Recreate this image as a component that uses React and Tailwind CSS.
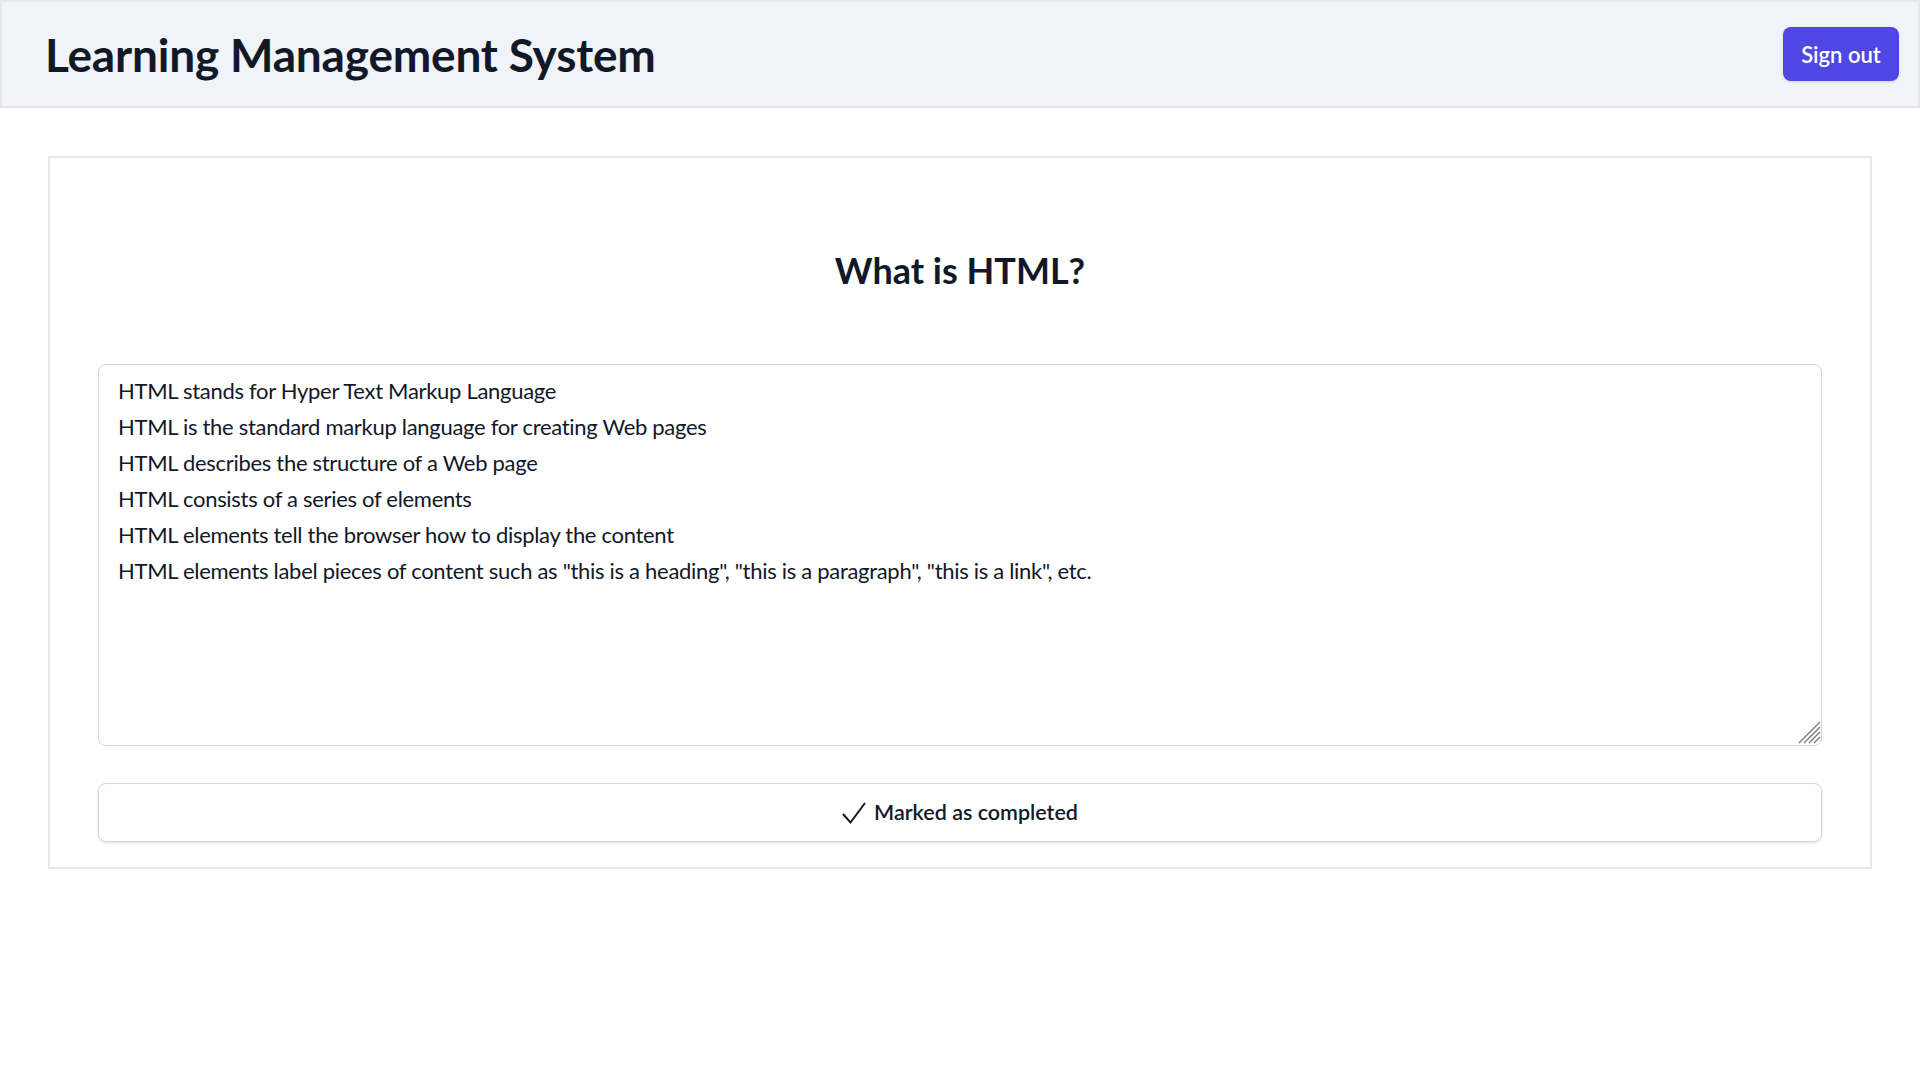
import React from "react";

const content = `HTML stands for Hyper Text Markup Language
HTML is the standard markup language for creating Web pages
HTML describes the structure of a Web page
HTML consists of a series of elements
HTML elements tell the browser how to display the content
HTML elements label pieces of content such as "this is a heading", "this is a paragraph", "this is a link", etc.`;

export default function App() {
  return (
    <div className="min-h-screen bg-white font-['Lato',sans-serif] text-[#111827]">
      <header className="flex h-[108px] items-center justify-between border-2 border-gray-200 bg-[#f0f3f8] pl-[43px] pr-[19px]">
        <h1 className="text-[46px] font-bold tracking-[-0.2px]">Learning Management System</h1>
        <button className="h-[54px] w-[116px] rounded-lg bg-[#4f46e5] text-[22px] font-semibold text-white shadow">
          Sign out
        </button>
      </header>
      <main className="px-12 pt-12">
        <div className="border-2 border-gray-200 px-12 pb-[25px]">
          <h2 className="pt-[92px] text-center text-4xl font-bold leading-10">What is HTML?</h2>
          <div className="relative mt-[74px]">
            <textarea
              className="block h-[382px] w-full resize-none rounded-lg border border-gray-300 py-2 pl-[19px] pr-4 text-[22px] leading-9 tracking-[-0.3px] text-[#111827] outline-none"
              defaultValue={content}
            />
            <svg
              className="pointer-events-none absolute bottom-[2px] right-[1px]"
              width="23"
              height="23"
              viewBox="0 0 23 23"
              stroke="#7a7a7a"
              strokeWidth="1.4"
            >
              <path d="M1 22 L22 1 M6 22 L22 6 M11 22 L22 11 M16 22 L22 16" />
            </svg>
          </div>
          <button className="mt-[37px] flex h-[59px] w-full items-center justify-center gap-2 rounded-lg border border-gray-300 text-[21.5px] font-semibold shadow-sm">
            <svg width="24" height="24" viewBox="0 0 24 24" fill="none" stroke="currentColor" strokeWidth="2">
              <path d="M1 13 L8.5 21.5 L23 2" />
            </svg>
            Marked as completed
          </button>
        </div>
      </main>
    </div>
  );
}
